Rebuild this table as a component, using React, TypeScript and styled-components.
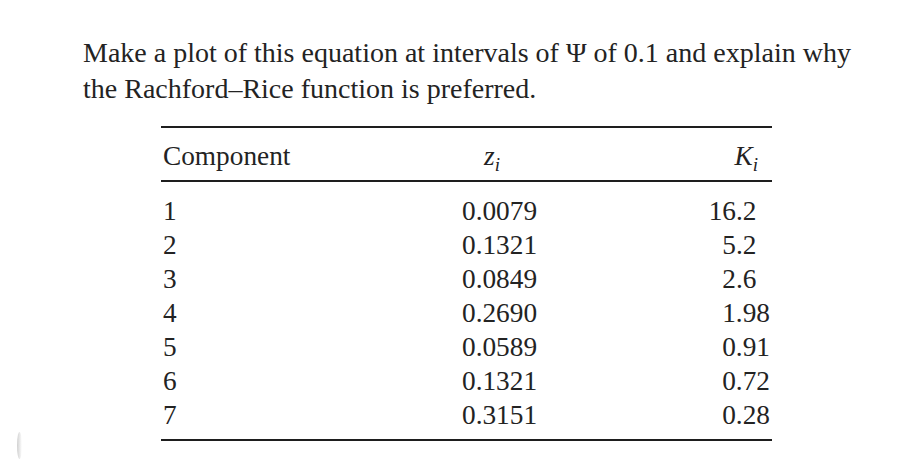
import React from "react";
import styled, { createGlobalStyle } from "styled-components";

const GlobalStyle = createGlobalStyle`
  html, body {
    margin: 0;
    padding: 0;
    background: #ffffff;
  }
  body {
    font-family: "Liberation Serif", "Times New Roman", serif;
    color: #232323;
  }
`;

const Page = styled.div`
  position: relative;
  width: 903px;
  height: 466px;
  overflow: hidden;
  padding: 35px 0 0 83px;
  box-sizing: border-box;
`;

const Prompt = styled.p`
  margin: 0;
  font-size: 28px;
  line-height: 36px;
  white-space: nowrap;
`;

const Table = styled.div`
  margin: 19px 0 0 78px;
  width: 611px;
  border-top: 2px solid #1e1e1e;
  border-bottom: 2px solid #1e1e1e;
  font-size: 27.3px;
`;

const HeadRow = styled.div`
  display: grid;
  grid-template-columns: 299px 1fr 160px;
  padding: 10px 2px 6px 2px;
  line-height: 36px;
  border-bottom: 2px solid #1e1e1e;
`;

const Body = styled.div`
  padding: 12px 2px 7px 2px;
`;

const Row = styled.div`
  display: grid;
  grid-template-columns: 299px 1fr 160px;
  line-height: 34px;
`;

const Cell = styled.div<{ $align?: "left" | "right"; $padLeft?: number; $padRight?: number }>`
  text-align: ${(p) => p.$align ?? "left"};
  padding-left: ${(p) => p.$padLeft ?? 0}px;
  padding-right: ${(p) => p.$padRight ?? 0}px;
  white-space: nowrap;
`;

const Sym = styled.span`
  font-style: italic;
`;

const Sub = styled.sub`
  font-style: italic;
  font-size: 19px;
  line-height: 0;
  vertical-align: -6px;
`;

const Smudge = styled.div`
  position: absolute;
  left: 17px;
  top: 432px;
  width: 5px;
  height: 27px;
  border-radius: 50%;
  background: linear-gradient(to right, #cfcfcf, #ececec 60%, #ffffff);
  filter: blur(0.6px);
`;

const rows = [
  { n: "1", z: "0.0079", k: "16.2" },
  { n: "2", z: "0.1321", k: "5.2" },
  { n: "3", z: "0.0849", k: "2.6" },
  { n: "4", z: "0.2690", k: "1.98" },
  { n: "5", z: "0.0589", k: "0.91" },
  { n: "6", z: "0.1321", k: "0.72" },
  { n: "7", z: "0.3151", k: "0.28" },
];

// decimal-align the K column: pad short fractions by one digit width
const decimalPad = (v: string) => {
  const frac = v.split(".")[1]?.length ?? 0;
  return (2 - frac) * 13.6;
};

export default function App() {
  return (
    <>
      <GlobalStyle />
      <Page>
        <Prompt>
          Make a plot of this equation at intervals of Ψ of 0.1 and explain why
          <br />
          the Rachford–Rice function is preferred.
        </Prompt>
        <Table>
          <HeadRow>
            <Cell>Component</Cell>
            <Cell $padLeft={22}>
              <Sym>z</Sym>
              <Sub>i</Sub>
            </Cell>
            <Cell $align="right" $padRight={12}>
              <Sym>K</Sym>
              <Sub>i</Sub>
            </Cell>
          </HeadRow>
          <Body>
            {rows.map((r) => (
              <Row key={r.n}>
                <Cell>{r.n}</Cell>
                <Cell>{r.z}</Cell>
                <Cell $align="right" $padRight={decimalPad(r.k)}>
                  {r.k}
                </Cell>
              </Row>
            ))}
          </Body>
        </Table>
        <Smudge />
      </Page>
    </>
  );
}
